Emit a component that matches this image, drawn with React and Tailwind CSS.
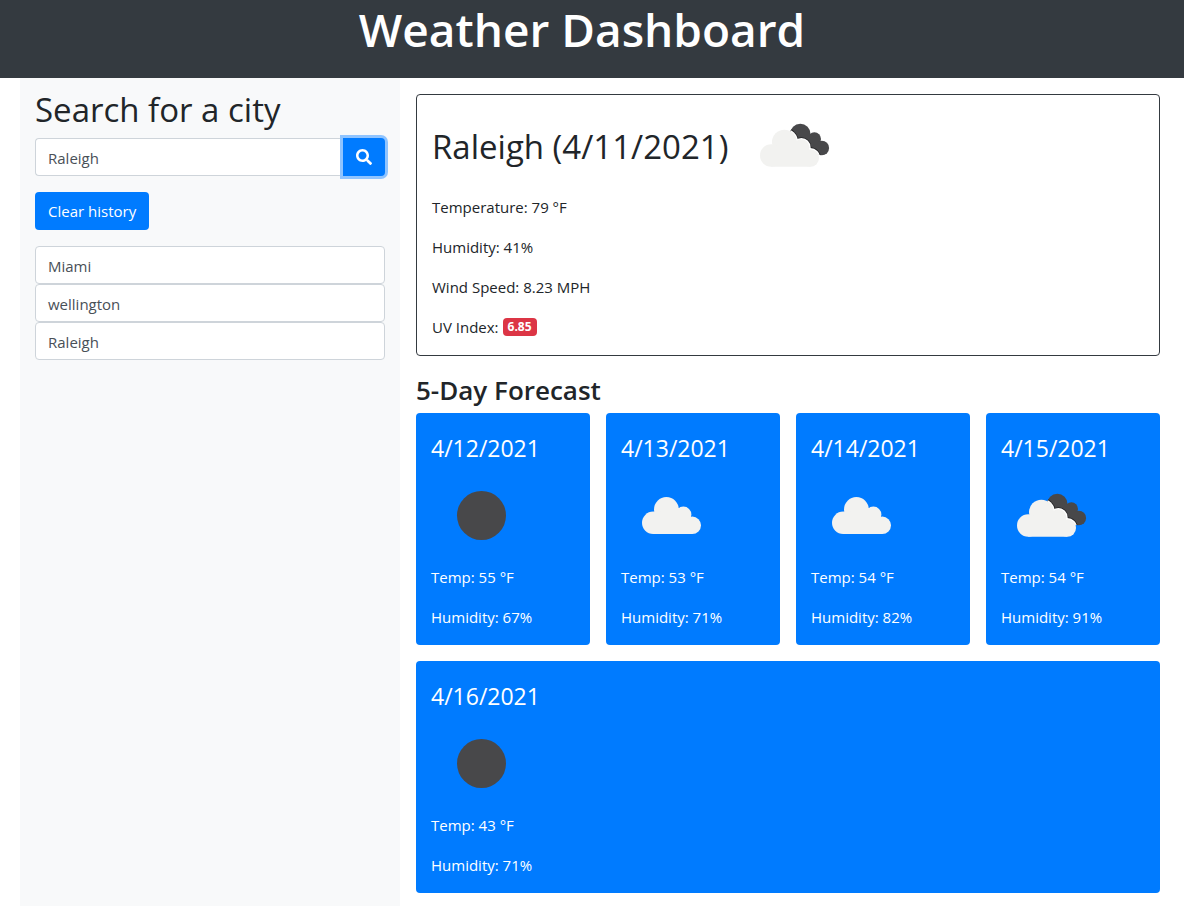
import { useId, useState } from "react";
import { FaSearch } from "react-icons/fa";

const forecast = [
  { date: "4/12/2021", icon: "night", temp: 55, humidity: 67 },
  { date: "4/13/2021", icon: "cloud", temp: 53, humidity: 71 },
  { date: "4/14/2021", icon: "cloud", temp: 54, humidity: 82 },
  { date: "4/15/2021", icon: "broken", temp: 54, humidity: 91 },
  { date: "4/16/2021", icon: "night", temp: 43, humidity: 71 },
];

function CloudShape({ grow = 0 }) {
  return (
    <>
      <circle cx="32.2" cy="56.8" r={11.2 + grow} />
      <circle cx="45.4" cy="43.4" r={12.4 + grow} />
      <circle cx="62.4" cy="48.6" r={8 + grow} />
      <circle cx="71.3" cy="59.3" r={8.7 + grow} />
      <path d="M32.2 68V50L45 42H60L71.3 55V68Z" />
    </>
  );
}

function BackCloud() {
  return (
    <>
      <circle cx="56.3" cy="38" r="10.2" />
      <circle cx="70.4" cy="42.9" r="6.6" />
      <circle cx="77.8" cy="52" r="7.3" />
      <path d="M50 40L60 34L72 42L78 50L76 59L60 58Z" />
    </>
  );
}

function WeatherIcon({ type }) {
  const clip = useId();
  return (
    <svg viewBox="0 -1 100 100" className="size-[100px] shrink-0" aria-hidden="true">
      {type === "night" && <circle cx="50.5" cy="49.5" r="24.5" fill="#48484a" />}
      {type === "cloud" && (
        <g fill="#f2f2f0">
          <CloudShape />
        </g>
      )}
      {type === "broken" && (
        <>
          <clipPath id={clip}>
            <BackCloud />
          </clipPath>
          <g fill="#48484a">
            <BackCloud />
          </g>
          <g clipPath={`url(#${clip})`}>
            <g transform="translate(-5 2.7)" fill="#222224">
              <CloudShape grow={2} />
            </g>
            <g transform="translate(-5 2.7)" fill="#ffffff">
              <CloudShape grow={1.2} />
            </g>
          </g>
          <g transform="translate(-5 2.7)" fill="#f2f2f0">
            <CloudShape />
          </g>
        </>
      )}
    </svg>
  );
}

export default function App() {
  const [city, setCity] = useState("Raleigh");
  const [history, setHistory] = useState(["Miami", "wellington", "Raleigh"]);

  return (
    <div className="flex min-h-screen flex-col bg-white font-['Open_Sans','Noto_Sans',sans-serif] text-[15px] leading-6 text-[#212529]">
      <header className="bg-[#343a40] pr-5 pb-5">
        <h1 className="text-center text-[46px] leading-[58px] font-semibold text-white">Weather Dashboard</h1>
      </header>

      <div className="flex grow pr-6 pl-5">
        <aside className="w-1/3 shrink-0 bg-[#f8f9fa] px-[15px] pt-2.5">
          <h2 className="mb-1.5 text-[33px] leading-[44px]">
            <label htmlFor="city">Search for a city</label>
          </h2>
          <form className="mb-4 flex" onSubmit={(e) => e.preventDefault()}>
            <input
              id="city"
              type="text"
              value={city}
              onChange={(e) => setCity(e.target.value)}
              className="h-[38px] min-w-0 grow rounded-l border border-r-0 border-[#ced4da] bg-white px-3 pt-px text-[#495057] outline-none"
            />
            <button
              type="submit"
              aria-label="Search"
              className="flex h-[38px] w-[42px] shrink-0 items-center justify-center rounded-r bg-[#007bff] text-base text-white ring-3 ring-[#8fc4ff]"
            >
              <FaSearch />
            </button>
          </form>
          <button
            type="button"
            onClick={() => setHistory([])}
            className="mb-4 h-[38px] rounded bg-[#007bff] px-[13px] text-white"
          >
            Clear history
          </button>
          <ul>
            {history.map((name) => (
              <li
                key={name}
                className="h-[38px] rounded border border-[#ced4da] bg-white px-3 pt-[7px] text-[#495057]"
              >
                {name}
              </li>
            ))}
          </ul>
        </aside>

        <main className="min-w-0 grow pt-4 pb-3 pl-4">
          <section className="rounded border border-[#343a40] px-[15px] pb-4">
            <div className="flex items-center gap-4">
              <h2 className="pt-1 text-[33px] leading-[44px]">Raleigh (4/11/2021)</h2>
              <WeatherIcon type="broken" />
            </div>
            <div className="flex flex-col gap-4">
              <p>Temperature: 79 °F</p>
              <p>Humidity: 41%</p>
              <p>Wind Speed: 8.23 MPH</p>
              <p className="flex items-center gap-1">
                UV Index:
                <span className="rounded bg-[#dc3545] px-[5px] text-[12px] leading-[18px] font-bold text-white">
                  6.85
                </span>
              </p>
            </div>
          </section>

          <h2 className="mt-4 mb-1 text-[26px] leading-[37px] font-semibold">5-Day Forecast</h2>
          <div className="flex flex-wrap gap-4">
            {forecast.map((day) => (
              <article
                key={day.date}
                className="min-w-[174px] flex-1 rounded bg-[#007bff] px-[15px] pt-5 pb-4 text-white"
              >
                <h3 className="mb-0.5 text-[23px] leading-[30px]">{day.date}</h3>
                <WeatherIcon type={day.icon} />
                <p className="mb-4">Temp: {day.temp} °F</p>
                <p>Humidity: {day.humidity}%</p>
              </article>
            ))}
          </div>
        </main>
      </div>
    </div>
  );
}
